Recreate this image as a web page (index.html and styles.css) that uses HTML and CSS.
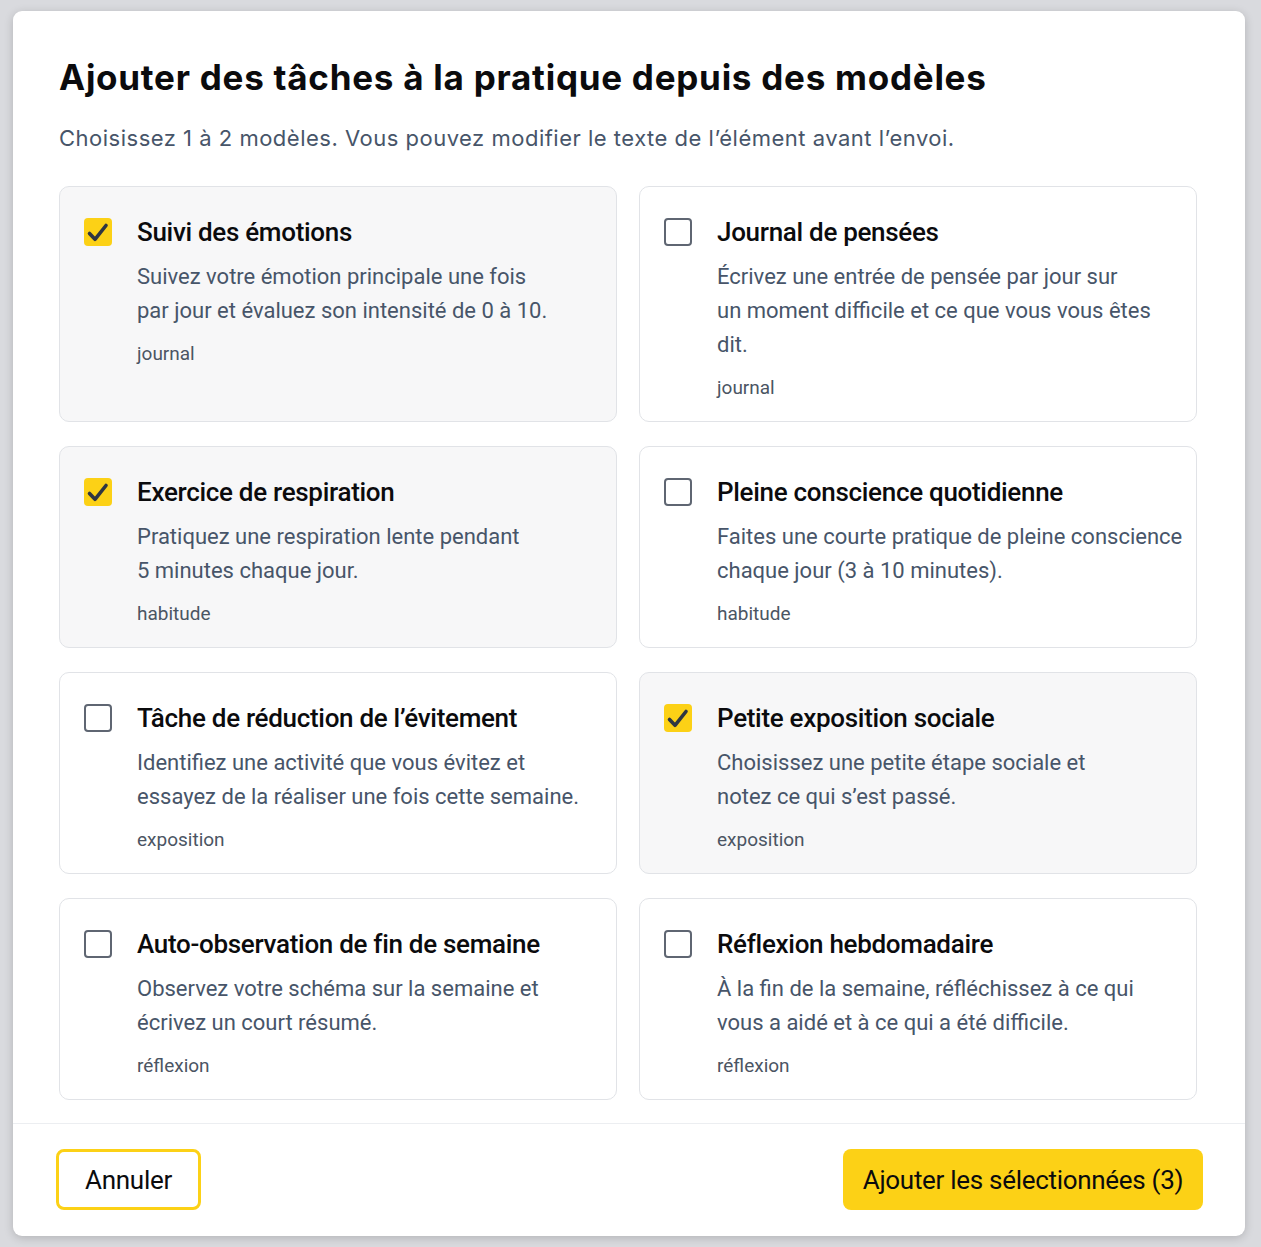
FILE: index.html
```html
<!DOCTYPE html>
<html lang="fr">
<head>
<meta charset="utf-8">
<title>Ajouter des tâches</title>
<link rel="stylesheet" href="styles.css">
</head>
<body>
<div class="backdrop">
  <div class="modal">
    <div class="modal-body">
      <h1 class="title">Ajouter des tâches à la pratique depuis des modèles</h1>
      <p class="subtitle">Choisissez 1 à 2 modèles. Vous pouvez modifier le texte de l’élément avant l’envoi.</p>
      <div class="grid">
        <label class="card selected">
          <span class="box checked"><svg viewBox="0 0 28 28"><path d="M5.5 15.5l5.5 5.8L22 7.5"/></svg></span>
          <span class="content">
            <span class="card-title">Suivi des émotions</span>
            <span class="desc">Suivez votre émotion principale une fois<br>par jour et évaluez son intensité de 0 à 10.</span>
            <span class="tag">journal</span>
          </span>
        </label>
        <label class="card">
          <span class="box"></span>
          <span class="content">
            <span class="card-title">Journal de pensées</span>
            <span class="desc">Écrivez une entrée de pensée par jour sur<br>un moment difficile et ce que vous vous êtes<br>dit.</span>
            <span class="tag">journal</span>
          </span>
        </label>
        <label class="card selected">
          <span class="box checked"><svg viewBox="0 0 28 28"><path d="M5.5 15.5l5.5 5.8L22 7.5"/></svg></span>
          <span class="content">
            <span class="card-title">Exercice de respiration</span>
            <span class="desc">Pratiquez une respiration lente pendant<br>5 minutes chaque jour.</span>
            <span class="tag">habitude</span>
          </span>
        </label>
        <label class="card">
          <span class="box"></span>
          <span class="content">
            <span class="card-title">Pleine conscience quotidienne</span>
            <span class="desc">Faites une courte pratique de pleine conscience<br>chaque jour (3 à 10 minutes).</span>
            <span class="tag">habitude</span>
          </span>
        </label>
        <label class="card">
          <span class="box"></span>
          <span class="content">
            <span class="card-title">Tâche de réduction de l’évitement</span>
            <span class="desc">Identifiez une activité que vous évitez et<br>essayez de la réaliser une fois cette semaine.</span>
            <span class="tag">exposition</span>
          </span>
        </label>
        <label class="card selected">
          <span class="box checked"><svg viewBox="0 0 28 28"><path d="M5.5 15.5l5.5 5.8L22 7.5"/></svg></span>
          <span class="content">
            <span class="card-title">Petite exposition sociale</span>
            <span class="desc">Choisissez une petite étape sociale et<br>notez ce qui s’est passé.</span>
            <span class="tag">exposition</span>
          </span>
        </label>
        <label class="card">
          <span class="box"></span>
          <span class="content">
            <span class="card-title">Auto-observation de fin de semaine</span>
            <span class="desc">Observez votre schéma sur la semaine et<br>écrivez un court résumé.</span>
            <span class="tag">réflexion</span>
          </span>
        </label>
        <label class="card">
          <span class="box"></span>
          <span class="content">
            <span class="card-title">Réflexion hebdomadaire</span>
            <span class="desc">À la fin de la semaine, réfléchissez à ce qui<br>vous a aidé et à ce qui a été difficile.</span>
            <span class="tag">réflexion</span>
          </span>
        </label>
      </div>
    </div>
    <div class="modal-footer">
      <button class="btn btn-secondary" type="button">Annuler</button>
      <button class="btn btn-primary" type="button">Ajouter les sélectionnées (3)</button>
    </div>
  </div>
</div>
</body>
</html>
```

FILE: styles.css
```css
* { box-sizing: border-box; }

html, body {
  margin: 0;
  padding: 0;
  background: #d9dade;
  font-family: Roboto, "Liberation Sans", sans-serif;
}

.backdrop {
  padding: 11px 16px 11px 13px;
  min-height: 1247px;
}

.modal {
  background: #ffffff;
  border-radius: 9px;
  box-shadow: 0 2px 10px rgba(0, 0, 0, 0.18);
  overflow: hidden;
}

.modal-body {
  padding: 45px 48px 23px 46px;
}

.title {
  margin: 0;
  font-family: Inter, "Liberation Sans", sans-serif;
  font-weight: 700;
  font-size: 35px;
  line-height: 42px;
  letter-spacing: 0.75px;
  color: #0b0b0d;
}

.subtitle {
  margin: 25px 0 0;
  font-family: Inter, "Liberation Sans", sans-serif;
  font-size: 22px;
  line-height: 30px;
  letter-spacing: 0.5px;
  color: #475569;
}

.grid {
  margin-top: 33px;
  display: grid;
  grid-template-columns: repeat(2, minmax(0, 1fr));
  column-gap: 22px;
  row-gap: 24px;
}

.card {
  display: flex;
  align-items: flex-start;
  gap: 25px;
  min-width: 0;
  padding: 29px 18px 20px 24px;
  border: 1px solid #e1e3e7;
  border-radius: 10px;
  background: #ffffff;
  cursor: pointer;
}

.card.selected {
  background: #f7f7f8;
}

.box {
  flex: 0 0 auto;
  width: 28px;
  height: 28px;
  margin-top: 2px;
  border: 2px solid #5f6672;
  border-radius: 4px;
  background: #ffffff;
}

.box.checked {
  border: 0;
  background: #fcd116;
}

.box svg {
  display: block;
  width: 28px;
  height: 28px;
  fill: none;
  stroke: #2f3642;
  stroke-width: 3.6;
  stroke-linecap: round;
  stroke-linejoin: round;
}

.content {
  display: flex;
  flex-direction: column;
  min-width: 0;
}

.card-title {
  font-size: 26px;
  line-height: 32px;
  font-weight: 500;
  color: #0b0b0d;
  letter-spacing: -0.3px;
}

.desc {
  margin-top: 12px;
  font-size: 22px;
  line-height: 34px;
  color: #475569;
  white-space: nowrap;
}

.tag {
  margin-top: 13px;
  font-size: 19px;
  line-height: 26px;
  color: #4b5563;
}

.modal-footer {
  border-top: 1px solid #eceef1;
  padding: 25px 42px 26px 43px;
  display: flex;
  justify-content: space-between;
  align-items: center;
}

.btn {
  height: 61px;
  border-radius: 8px;
  font-family: Roboto, "Liberation Sans", sans-serif;
  font-size: 26px;
  color: #0b0b0d;
  cursor: pointer;
  letter-spacing: -0.3px;
}

.btn-secondary {
  width: 145px;
  background: #ffffff;
  border: 3px solid #fcd116;
}

.btn-primary {
  width: 360px;
  background: #fcd116;
  border: 0;
}
```
